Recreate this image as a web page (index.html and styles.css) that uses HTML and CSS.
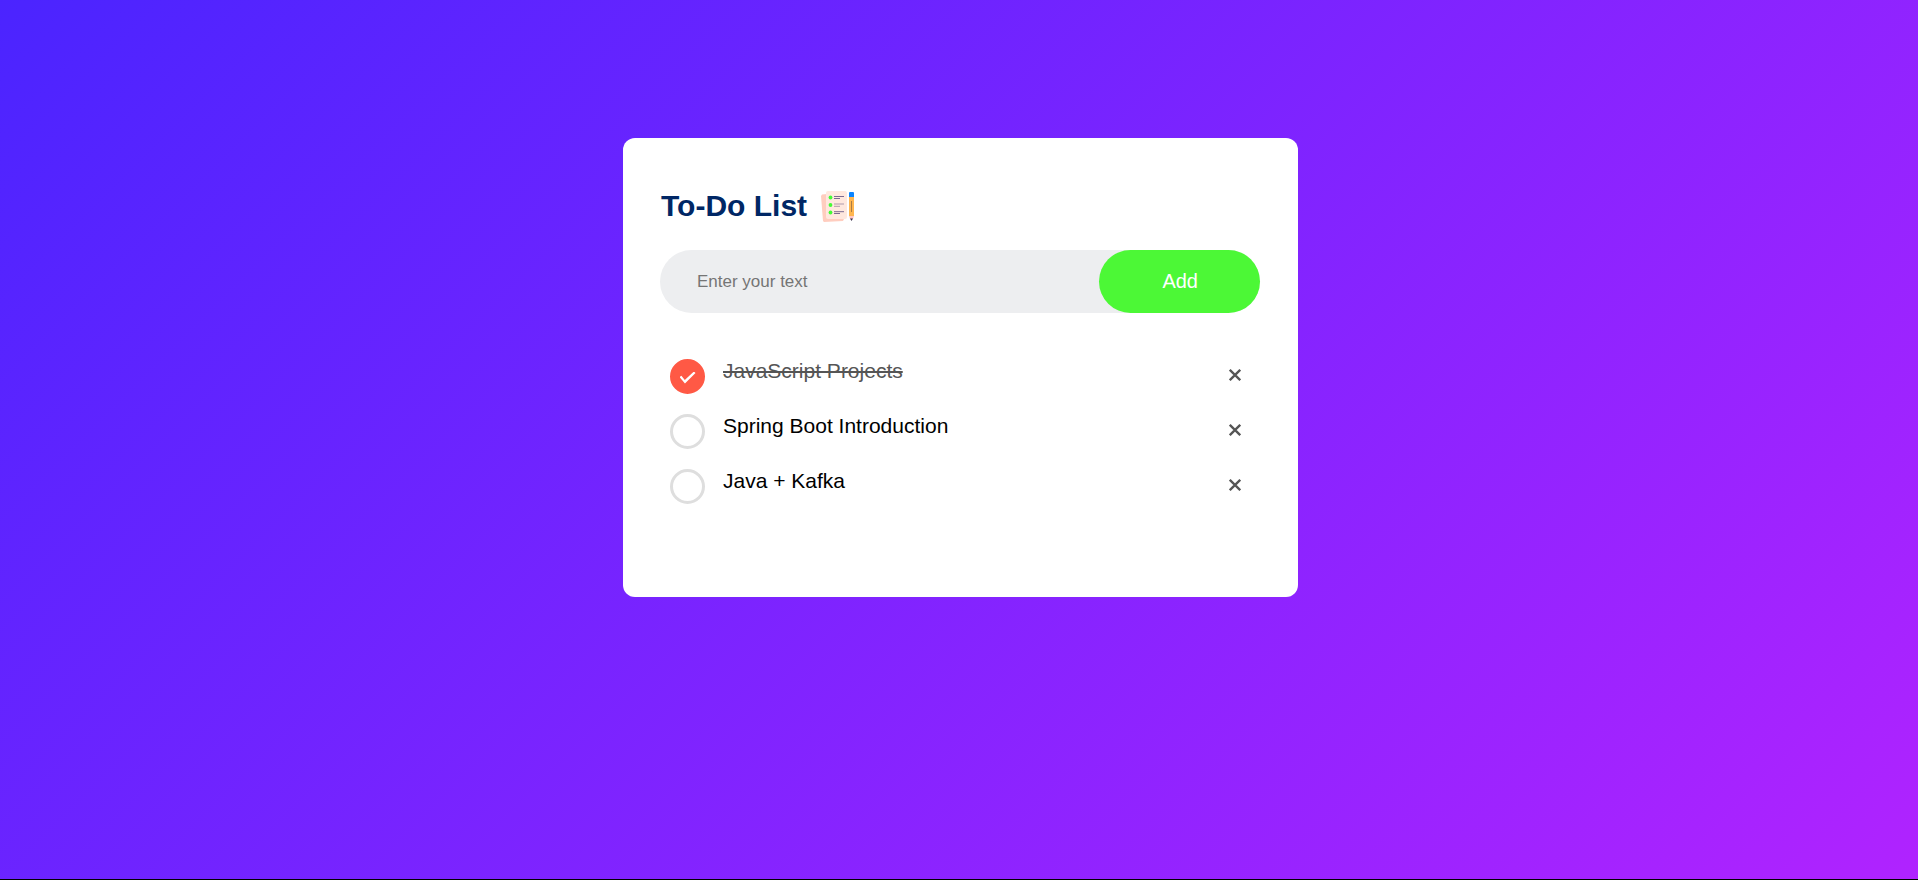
FILE: index.html
```html
<!DOCTYPE html>
<html lang="en">
<head>
  <meta charset="utf-8">
  <meta name="viewport" content="width=device-width, initial-scale=1">
  <title>To-Do List</title>
  <link rel="stylesheet" href="styles.css">
</head>
<body>
  <main class="todo-app">
    <h1 class="title">To-Do List
      <svg class="title-icon" viewBox="0 0 37 37" aria-hidden="true">
        <path fill="#ffcdbf" d="M3 6.500 L8 6 L25 31 L24 33 L5 34 L4 33 L2 8 Z"/>
        <rect x="7" y="3" width="21" height="28" rx="2" fill="#ffe8de"/>
        <g fill="#43fb35"><circle cx="11.500" cy="9.500" r="1.900"/><circle cx="11.500" cy="17" r="1.900"/><circle cx="11.500" cy="24.500" r="1.900"/></g>
        <g stroke="#7d6a91" stroke-width="1">
          <path d="M15 8.500h10M15 10.500h6"/>
          <path d="M15 16h10M15 18.300h6" stroke="#b09aab"/>
          <path d="M15 23.700h10M15 25.500h6"/>
        </g>
        <rect x="30" y="4" width="5" height="6" rx="1" fill="#0a84ff"/>
        <path fill="#ffb64f" d="M30 9h5v19h-5z"/>
        <path stroke="#a97b46" d="M32.500 13v11"/>
        <path fill="#ffc6c4" d="M30 28h5l-1 3h-3z"/>
        <path fill="#39304a" d="M31 30.500h3l-1.500 2.500z"/>
      </svg>
    </h1>
    <form class="entry">
      <input class="entry-text" type="text" placeholder="Enter your text" aria-label="New task">
      <button class="entry-add" type="button">Add</button>
    </form>
    <ul class="tasks">
      <li class="task">
        <input class="task-check" type="checkbox" id="task-1" checked>
        <label class="task-name" for="task-1">JavaScript Projects</label>
        <button class="task-remove" type="button" aria-label="Remove JavaScript Projects"><svg class="cross" viewBox="0 0 12 12"><path d="M.8.8l10.400 10.400M11.200.8L.8 11.200"/></svg></button>
      </li>
      <li class="task">
        <input class="task-check" type="checkbox" id="task-2">
        <label class="task-name" for="task-2">Spring Boot Introduction</label>
        <button class="task-remove" type="button" aria-label="Remove Spring Boot Introduction"><svg class="cross" viewBox="0 0 12 12"><path d="M.8.8l10.400 10.400M11.200.8L.8 11.200"/></svg></button>
      </li>
      <li class="task">
        <input class="task-check" type="checkbox" id="task-3">
        <label class="task-name" for="task-3">Java + Kafka</label>
        <button class="task-remove" type="button" aria-label="Remove Java + Kafka"><svg class="cross" viewBox="0 0 12 12"><path d="M.8.8l10.400 10.400M11.200.8L.8 11.200"/></svg></button>
      </li>
    </ul>
  </main>
</body>
</html>
```

FILE: styles.css
```css
* {
  box-sizing: border-box;
  margin: 0;
  padding: 0;
}

body {
  min-height: 100vh;
  padding: 138px 12px 24px 15px;
  border-bottom: 1px solid #000;
  background: linear-gradient(135deg, #4b24ff, #b023ff) border-box;
  font-family: "Liberation Sans", Arial, sans-serif;
}

.todo-app {
  max-width: 675px;
  margin: 0 auto;
  padding: 50px 38px 88px 37px;
  border-radius: 12px;
  background: #fff;
}

.title {
  display: flex;
  align-items: flex-start;
  gap: 12px;
  margin-bottom: 25px;
  padding-left: 1px;
  color: #002765;
  font-size: 30px;
  line-height: 35px;
}

.title-icon {
  width: 37px;
  height: 37px;
}

.entry {
  display: flex;
  margin-bottom: 31px;
  border-radius: 32px;
  background: #edeef0;
}

.entry-text {
  flex: 1;
  min-width: 0;
  padding-left: 37px;
  border: 0;
  outline: 0;
  background: transparent;
  font: 17px "Liberation Sans", Arial, sans-serif;
}

.entry-text::placeholder {
  color: #757575;
}

.entry-add {
  padding: 20px 62px 20px 63px;
  border: 0;
  border-radius: 32px;
  background: #4cf836;
  color: #fff;
  font: 20px/23px "Liberation Sans", Arial, sans-serif;
  cursor: pointer;
}

.tasks {
  list-style: none;
}

.task {
  display: flex;
  align-items: flex-start;
  gap: 18px;
  padding: 15px 9px 5px 10px;
}

.task-check {
  display: grid;
  flex: none;
  place-items: center;
  width: 35px;
  height: 35px;
  border: 3px solid #dedede;
  border-radius: 50%;
  appearance: none;
  cursor: pointer;
}

.task-check:checked {
  border-color: #ff5945;
  background: #ff5945;
}

.task-check:checked::before {
  content: "";
  width: 16px;
  height: 12px;
  margin-top: 2px;
  background: #fff;
  clip-path: polygon(0 45%, 12% 35%, 33% 70%, 90% 0, 100% 12%, 34% 100%);
}

.task-name {
  flex: 1;
  color: #000;
  font-size: 21px;
  line-height: 23px;
  cursor: pointer;
}

.task-check:checked + .task-name {
  color: #555;
  text-decoration: line-through;
}

.task-remove {
  display: grid;
  place-items: center;
  width: 32px;
  height: 32px;
  border: 0;
  background: transparent;
  cursor: pointer;
}

.cross {
  width: 12px;
  height: 12px;
  fill: none;
  stroke: #555;
  stroke-width: 2.3;
}
```
